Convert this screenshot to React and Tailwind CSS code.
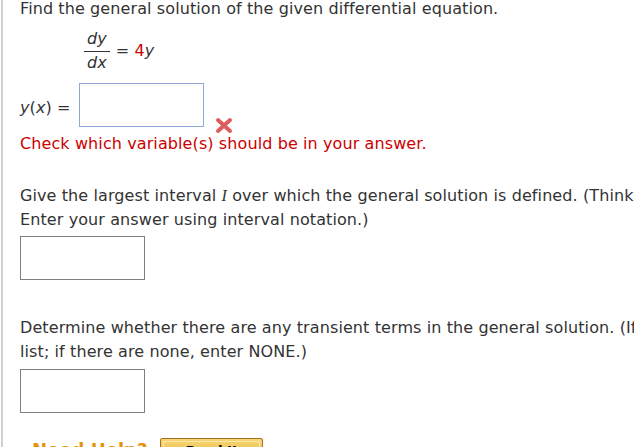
import React from 'react';

const font = { fontFamily: '"DejaVu Sans", Verdana, sans-serif' };

const AnswerBox = ({ tone = 'gray' }) => (
  <input
    type="text"
    className={
      tone === 'blue'
        ? 'w-[125px] h-[44px] border border-[#8fa8d4] bg-white outline-none'
        : 'w-[125px] h-[44px] border border-[#808080] bg-white outline-none'
    }
  />
);

const WrongMark = () => (
  <svg width="18" height="17" viewBox="0 0 18 17" className="self-end mb-[-7px] ml-[11px]">
    <path d="M3 3 L15 14 M15 3 L3 14" stroke="#e05c5c" strokeWidth="4" strokeLinecap="round" />
  </svg>
);

export default function App() {
  return (
    <div className="h-[447px] w-[634px] overflow-hidden bg-white">
      <div className="ml-px h-full border-l-2 border-[#cfcfcf] pl-[17px] text-[16px] tracking-[0.1px] text-[#333]" style={font}>
        <p className="whitespace-nowrap leading-[18px]">
          Find the general solution of the given differential equation.
        </p>

        <div className="mt-[12px] ml-[64px] flex items-center">
          <div className="flex flex-col items-stretch">
            <span className="px-[3px] pb-[3px] text-center italic leading-[18px]">dy</span>
            <span className="border-t border-[#333] px-[3px] pt-[2px] text-center italic leading-[18px]">dx</span>
          </div>
          <span className="ml-[6px] leading-[18px]">
            = <span className="text-[#cc0000]">4</span>
            <span className="italic">y</span>
          </span>
        </div>

        <div className="mt-[11px] flex items-center">
          <span className="mt-[5px] mr-[8px] whitespace-nowrap leading-[18px]">
            <span className="italic">y</span>(<span className="italic">x</span>) =
          </span>
          <AnswerBox tone="blue" />
          <WrongMark />
        </div>

        <p className="mt-[5px] whitespace-nowrap leading-[24px] text-[#cc0000]">
          Check which variable(s) should be in your answer.
        </p>

        <div className="mt-[28px] leading-[24px]">
          <p className="whitespace-nowrap">
            Give the largest interval{' '}
            <span className="italic" style={{ fontFamily: '"Liberation Serif", serif' }}>
              I
            </span>{' '}
            over which the general solution is defined. (Think about any implicit assumptions.
          </p>
          <p className="whitespace-nowrap">Enter your answer using interval notation.)</p>
        </div>
        <div className="mt-[4px]">
          <AnswerBox />
        </div>

        <div className="mt-[36px] leading-[24px]">
          <p className="whitespace-nowrap">
            Determine whether there are any transient terms in the general solution. (If there are more than one, enter a comma-separated
          </p>
          <p className="whitespace-nowrap">list; if there are none, enter NONE.)</p>
        </div>
        <div className="mt-[5px]">
          <AnswerBox />
        </div>

        <div className="mt-[25px] flex items-start tracking-normal">
          <span className="ml-[12px] mt-[1px] text-[18px] font-bold leading-[22px] text-[#e4940c]">Need Help?</span>
          <button className="ml-[13px] h-[26px] w-[103px] rounded-[2px] border border-[#a8701e] bg-gradient-to-b from-[#f6d674] to-[#e8b430] p-[2px]">
            <span className="block h-full w-full border border-[#fbe7a8] text-[13px] font-bold leading-[18px] text-black">
              Read It
            </span>
          </button>
        </div>
      </div>
    </div>
  );
}
